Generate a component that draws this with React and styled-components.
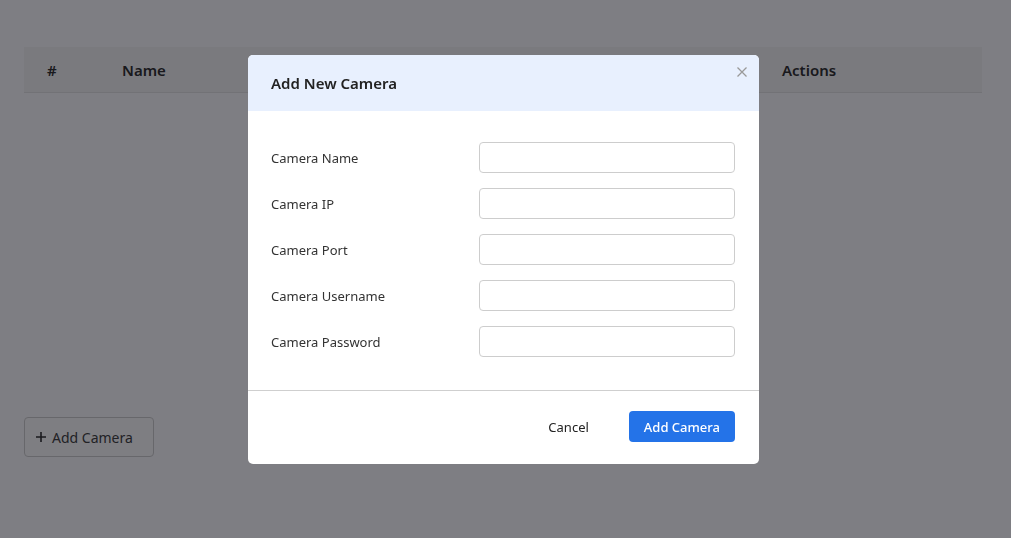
import React from "react";
import styled, { createGlobalStyle } from "styled-components";

const GlobalStyle = createGlobalStyle`
  html, body {
    margin: 0;
    padding: 0;
    background: #fdfdff;
    font-family: "Noto Sans", "Segoe UI", sans-serif;
    color: #212529;
  }
`;

const Page = styled.div`
  padding: 47px 29px 0 24px;
  height: 538px;
  box-sizing: border-box;
`;

const Table = styled.div`
  width: 100%;
`;

const HeadRow = styled.div`
  display: grid;
  grid-template-columns: 74px 660px 1fr;
  align-items: center;
  height: 45px;
  background: #f5f5f4;
  border-bottom: 1px solid #e4e4e4;
`;

const HeadCell = styled.div`
  font-size: 15px;
  font-weight: 600;
  color: #333;
  padding-left: ${(p) => p.$pad || 0}px;
`;

const AddButton = styled.button`
  margin-top: 324px;
  display: flex;
  align-items: center;
  gap: 6px;
  height: 40px;
  padding: 0 20px 0 11px;
  background: #fcfcfc;
  border: 1px solid #cfcfcf;
  border-radius: 4px;
  font-family: inherit;
  font-size: 14px;
  color: #444;
`;

const Overlay = styled.div`
  position: fixed;
  inset: 0;
  background: rgba(0, 0, 8, 0.5);
  display: flex;
  justify-content: center;
  align-items: flex-start;
  padding: 55px 4px 0 0;
`;

const Dialog = styled.div`
  width: 511px;
  background: #fff;
  border-radius: 5px;
  overflow: hidden;
  position: relative;
`;

const Header = styled.div`
  height: 56px;
  display: flex;
  align-items: center;
  padding: 0 23px;
  background: #e8f0fe;
`;

const Title = styled.h2`
  margin: 0;
  font-size: 15px;
  font-weight: 600;
  color: #222;
`;

const Close = styled.button`
  position: absolute;
  top: 9px;
  right: 9px;
  width: 16px;
  height: 16px;
  padding: 0;
  border: 0;
  background: none;
  display: flex;
  align-items: center;
  justify-content: center;
`;

const Body = styled.div`
  padding: 31px 24px 33px 23px;
  display: flex;
  flex-direction: column;
  gap: 15px;
  border-bottom: 1px solid #cfcfcf;
`;

const Field = styled.div`
  display: grid;
  grid-template-columns: 208px 1fr;
  align-items: center;
`;

const Label = styled.label`
  font-size: 13px;
  color: #333;
`;

const Input = styled.input`
  height: 31px;
  box-sizing: border-box;
  border: 1px solid #cdcdcd;
  border-radius: 4px;
  font-family: inherit;
  font-size: 13px;
  padding: 0 8px;
  outline: none;
`;

const Footer = styled.div`
  display: flex;
  justify-content: flex-end;
  align-items: center;
  gap: 20px;
  padding: 20px 24px 22px;
`;

const Button = styled.button`
  height: 31px;
  padding: 0 ${(p) => (p.$primary ? 15 : 20)}px;
  border: 0;
  border-radius: 4px;
  font-family: inherit;
  font-size: 13px;
  font-weight: ${(p) => (p.$primary ? 500 : 400)};
  background: ${(p) => (p.$primary ? "#2473e8" : "transparent")};
  color: ${(p) => (p.$primary ? "#fff" : "#222")};
`;

const fields = [
  "Camera Name",
  "Camera IP",
  "Camera Port",
  "Camera Username",
  "Camera Password",
];

export default function App() {
  return (
    <>
      <GlobalStyle />
      <Page>
        <Table>
          <HeadRow>
            <HeadCell $pad={23}>#</HeadCell>
            <HeadCell $pad={24}>Name</HeadCell>
            <HeadCell $pad={24}>Actions</HeadCell>
          </HeadRow>
        </Table>
        <AddButton>
          <svg width="10" height="10" viewBox="0 0 10 10">
            <path d="M5 0v10M0 5h10" stroke="#333" strokeWidth="1.6" />
          </svg>
          Add Camera
        </AddButton>
      </Page>
      <Overlay>
        <Dialog>
          <Header>
            <Title>Add New Camera</Title>
          </Header>
          <Close aria-label="Close">
            <svg width="10" height="10" viewBox="0 0 10 10">
              <path d="M0.5 0.5l9 9M9.5 0.5l-9 9" stroke="#999" strokeWidth="1.3" />
            </svg>
          </Close>
          <Body>
            {fields.map((f) => (
              <Field key={f}>
                <Label>{f}</Label>
                <Input type={f.includes("Password") ? "password" : "text"} />
              </Field>
            ))}
          </Body>
          <Footer>
            <Button>Cancel</Button>
            <Button $primary>Add Camera</Button>
          </Footer>
        </Dialog>
      </Overlay>
    </>
  );
}
